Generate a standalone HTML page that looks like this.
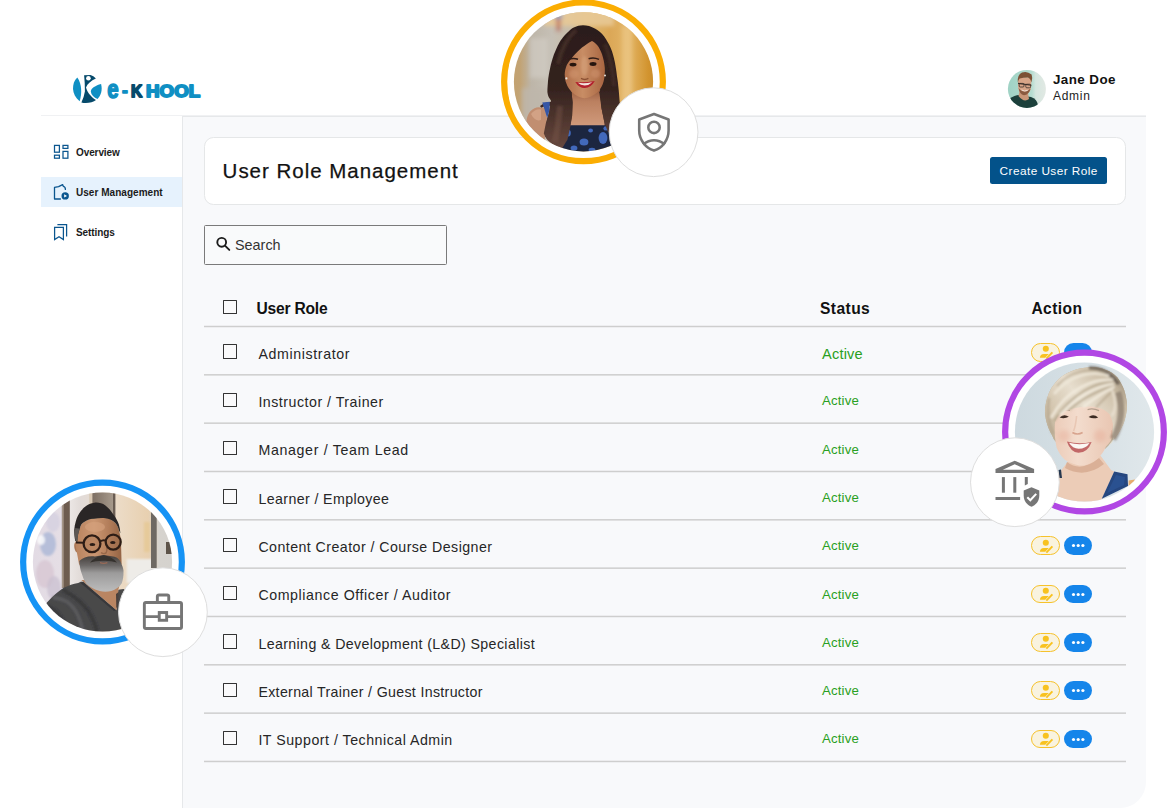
<!DOCTYPE html>
<html lang="en">
<head>
<meta charset="utf-8">
<title>User Role Management</title>
<style>
*{box-sizing:border-box;margin:0;padding:0}
html,body{width:1167px;height:808px;overflow:hidden;background:#fff}
body{position:relative;font-family:"Liberation Sans",sans-serif;color:#1a1a1a}
.abs{position:absolute}
.t{position:absolute;white-space:nowrap;line-height:1}
#hline{left:41px;top:115px;width:1105px;height:1px;background:#f0f1f3}
#panel{left:182px;top:116px;width:964px;height:692px;background:#f8f9fb;border-left:1px solid #e6e8ea;border-top:1px solid #e6e8ea;border-bottom-right-radius:26px}
#navact{left:41px;top:177px;width:141px;height:30px;background:#e6f2fd}
.nav{font-size:10px;font-weight:bold;color:#1b1b1b;left:76px}
#card{left:204px;top:137px;width:922px;height:68px;background:#fff;border:1px solid #e5e7e8;border-radius:9.5px}
#title{left:222.6px;top:160.6px;font-size:20.5px;color:#121212;letter-spacing:.98px;-webkit-text-stroke:.25px #121212}
#btn{left:990px;top:157px;width:117px;height:27px;background:#03528a;border-radius:2.5px;color:#fff;font-size:11.8px;text-align:center;line-height:28.6px;letter-spacing:.45px;text-indent:.45px}
#search{left:204px;top:225px;width:243px;height:40px;border:1px solid #7a7a7a;border-radius:1.5px;background:#f9fafb}
#stext{left:235px;top:238px;font-size:14.4px;color:#333}
.th{font-size:15.6px;font-weight:bold;color:#111;top:301.2px}
.cb{position:absolute;left:223px;width:14.3px;height:14.3px;border:1.25px solid #333;border-radius:.6px;background:#fafafb}
.rt{font-size:14.2px;color:#262626;left:258.4px}
.st{font-size:13.2px;color:#2aa022;left:822px;letter-spacing:.18px}
.st1{font-size:14.6px}
.py{position:absolute;left:1031.1px;width:29.4px;height:18.9px;border:1.5px solid #f6c22c;border-radius:10px;background:#f9f3df;overflow:hidden}
.py svg{position:absolute;left:-1.5px;top:-1.5px}
.pb{position:absolute;left:1063.6px;width:28.4px;height:18.9px;border-radius:10px;background:#1585ea;text-align:center;font-size:0;line-height:18.9px}
.pb svg{display:block}
.uname{left:1053px;top:73px;font-size:13.4px;font-weight:bold;color:#111;letter-spacing:.42px}
.urole{left:1053px;top:90px;font-size:12px;color:#1c1c1c;letter-spacing:.7px}

</style>
</head>
<body>
<!-- shared svg filters -->
<svg width="0" height="0" style="position:absolute">
<defs>
<filter id="b1" x="-20%" y="-20%" width="140%" height="140%"><feGaussianBlur stdDeviation="1"/></filter>
<filter id="b2" x="-20%" y="-20%" width="140%" height="140%"><feGaussianBlur stdDeviation="2"/></filter>
<filter id="b3" x="-20%" y="-20%" width="140%" height="140%"><feGaussianBlur stdDeviation="3.5"/></filter>
<filter id="b05" x="-20%" y="-20%" width="140%" height="140%"><feGaussianBlur stdDeviation="0.5"/></filter>
</defs>
</svg>

<!-- header -->
<div class="abs" id="hline"></div>
<div class="abs" id="panel"></div>

<!-- logo -->
<svg class="abs" style="left:65px;top:68px" width="145" height="40" viewBox="65 68 145 40">
<path d="M77.3 77.6 C71.4 83 71 95 79.7 101.2 C82 94 82 84 77.3 77.6 Z" fill="#0f8fc3"/>
<path d="M84.1 75.2 L90.5 75 Q93.5 75.8 95.9 78.4 C91 80.6 87.4 83.6 86 87.4 C87.6 93 91.5 97 96 100 C93 102.6 86 103.6 81.4 102.4 Q84 97 84.9 91.4 Q85 83 84.1 75.2 Z" fill="#064a6b"/>
<circle cx="88.4" cy="78.3" r="2.3" fill="#fff"/>
<path d="M101.1 84.1 C95.6 85.6 91 88.2 90.8 91.6 C91.2 95 94 97.6 97.5 99 C101 95.6 102.6 90 101.1 84.1 Z" fill="#0f8fc3"/>
<g font-family="Liberation Sans, sans-serif" font-weight="bold" stroke-linejoin="round">
<text x="107.3" y="97.7" font-size="25" fill="#0f8fc3" stroke="#0f8fc3" stroke-width="1.5" textLength="11.4" lengthAdjust="spacingAndGlyphs">e</text>
<text x="121.9" y="96.8" font-size="19" fill="#0f8fc3" stroke="#0f8fc3" stroke-width="1.5" textLength="5.8" lengthAdjust="spacingAndGlyphs">-</text>
<text x="131" y="96.8" font-size="16.6" fill="#064a6b" stroke="#064a6b" stroke-width="1.8" textLength="11.2" lengthAdjust="spacingAndGlyphs">K</text>
<text x="146.1" y="96.8" font-size="16.6" fill="#0f8fc3" stroke="#0f8fc3" stroke-width="1.8" textLength="54" lengthAdjust="spacingAndGlyphs">HOOL</text>
</g>
</svg>

<!-- user -->
<svg class="abs" style="left:1007px;top:69px" width="40" height="40" viewBox="0 0 40 40">
<defs><clipPath id="cav"><circle cx="19.9" cy="19.9" r="19"/></clipPath>
<linearGradient id="gav" x1="0" x2="1" y1="0" y2="0"><stop offset="0" stop-color="#9ed2c4"/><stop offset=".62" stop-color="#b5dcd0"/><stop offset=".72" stop-color="#d5e6df"/><stop offset="1" stop-color="#e3e9e4"/></linearGradient></defs>
<g clip-path="url(#cav)">
<rect width="40" height="40" fill="url(#gav)"/>
<g filter="url(#b05)">
<path d="M2 30 Q8 26 12 26 L24 28 Q30 30 31 36 L31 42 L0 42 Z" fill="#1b403b"/>
<path d="M12.5 22 L21 24 L22 30 Q17 34 11.5 27 Z" fill="#c99678"/>
<path d="M11.2 8.6 L24.2 8.6 L24.2 17 Q23.6 25.4 17.6 25.4 Q11.6 25.4 11 17 Z" fill="#d8a588"/>
<path d="M11.6 19 Q12.5 25.5 17 26.2 Q22 26 23.6 19.5 Q20 23 17.5 22.4 Q14 22.4 11.6 19 Z" fill="#8a5a41"/>
<path d="M10.8 13.5 Q10 6 15 3.6 Q20 1.6 24.6 5.6 Q26 9 24.4 13.6 Q23.6 9.6 21 8.6 Q16 8.6 12.6 9.4 Q11.4 11 10.8 13.5 Z" fill="#7b5136"/>
<path d="M11 14.4 L24.4 16.2" stroke="#3a2f2a" stroke-width="1.1" fill="none"/>
<rect x="12.2" y="14.4" width="4.8" height="3.6" rx="1" fill="none" stroke="#3a2f2a" stroke-width=".8"/>
<rect x="18.8" y="15.2" width="4.8" height="3.6" rx="1" fill="none" stroke="#3a2f2a" stroke-width=".8"/>
<path d="M14.6 21 Q17.5 22.8 20.6 21.4" stroke="#f3e6de" stroke-width=".9" fill="none"/>
</g>
</g>
</svg>
<div class="t uname">Jane Doe</div>
<div class="t urole">Admin</div>

<!-- sidebar -->
<div class="abs" id="navact"></div>
<svg class="abs" style="left:52px;top:143px" width="18" height="18" viewBox="52 143 18 18" fill="none" stroke="#0b568f" stroke-width="1.25">
<rect x="54.5" y="145.4" width="4.9" height="6.8"/><rect x="54.5" y="155.2" width="4.9" height="3"/>
<rect x="63" y="145.4" width="4.9" height="3"/><rect x="63" y="151.4" width="4.9" height="6.8"/>
</svg>
<svg class="abs" style="left:52px;top:182px" width="20" height="20" viewBox="52 182 20 20" fill="none" stroke="#0b568f" stroke-width="1.3" stroke-linejoin="round" stroke-linecap="round">
<path d="M60.4 199 L54.5 199 L54.5 187.4 L58.6 186.6 L62.6 184.6 L63.4 186.4 Q65.4 186.8 65.4 189.4"/>
<circle cx="65.2" cy="195.9" r="3.7" fill="#0b568f" stroke="none"/>
<path d="M64.2 194.2 L67 195.9 L64.2 197.6 Z" fill="#fff" stroke="none"/>
</svg>
<svg class="abs" style="left:52px;top:222px" width="18" height="20" viewBox="52 222 18 20" fill="none" stroke="#0b568f" stroke-width="1.25" stroke-linejoin="miter">
<path d="M54.6 227.4 L63.4 227.4 L63.4 239.6 L59 236.8 L54.6 239.6 Z"/>
<path d="M57.4 224.6 L66.6 224.6 L66.6 236.4"/>
</svg>
<div class="t nav" style="top:147.6px;letter-spacing:-.1px">Overview</div>
<div class="t nav" style="top:188.2px;letter-spacing:.04px">User Management</div>
<div class="t nav" style="top:227.6px;letter-spacing:-.08px">Settings</div>
<!-- title card -->
<div class="abs" id="card"></div>
<div class="t" id="title">User Role Management</div>
<div class="t" id="btn">Create User Role</div>

<!-- search -->
<div class="abs" id="search"></div>
<svg class="abs" style="left:214px;top:235.4px" width="18" height="18" viewBox="214 236 18 18" fill="none" stroke="#1c1c1c" stroke-width="1.9" stroke-linecap="round"><circle cx="221.7" cy="243.3" r="4.4"/><path d="M225.2 246.8 L229.3 250.9"/></svg>
<div class="t" id="stext">Search</div>

<!-- table -->
<div class="cb" style="top:300px"></div>
<div class="t th" style="left:256.4px;letter-spacing:-.2px">User Role</div>
<div class="t th" style="left:820px;letter-spacing:.42px">Status</div>
<div class="t th" style="left:1031.4px;letter-spacing:.42px">Action</div>
<div class="cb" style="top:344.3px"></div>
<div class="t rt" style="top:346.7px;letter-spacing:0.63px">Administrator</div>
<div class="t st st1" style="top:346.9px">Active</div>
<div class="py" style="top:342.9px"><svg viewBox="0 0 30 19" width="30" height="19" fill="#f8c21f"><circle cx="14.8" cy="6.8" r="3.05"/><path d="M8.9 15.7 Q9 12.2 13 12 L17.8 12 L14.2 15.7 Z"/><path d="M14.7 16 L20.7 9.8 L22.1 11.1 L16 17.2 Z"/></svg></div>
<div class="pb" style="top:342.9px"><svg viewBox="0 0 28.4 18.9" width="28.4" height="18.9"><circle cx="9.5" cy="9.5" r="1.6" fill="#fff"/><circle cx="14.2" cy="9.5" r="1.6" fill="#fff"/><circle cx="18.9" cy="9.5" r="1.6" fill="#fff"/></svg></div>
<div class="cb" style="top:392.6px"></div>
<div class="t rt" style="top:395.0px;letter-spacing:0.51px">Instructor / Trainer</div>
<div class="t st" style="top:394.1px">Active</div>
<div class="py" style="top:391.2px"><svg viewBox="0 0 30 19" width="30" height="19" fill="#f8c21f"><circle cx="14.8" cy="6.8" r="3.05"/><path d="M8.9 15.7 Q9 12.2 13 12 L17.8 12 L14.2 15.7 Z"/><path d="M14.7 16 L20.7 9.8 L22.1 11.1 L16 17.2 Z"/></svg></div>
<div class="pb" style="top:391.2px"><svg viewBox="0 0 28.4 18.9" width="28.4" height="18.9"><circle cx="9.5" cy="9.5" r="1.6" fill="#fff"/><circle cx="14.2" cy="9.5" r="1.6" fill="#fff"/><circle cx="18.9" cy="9.5" r="1.6" fill="#fff"/></svg></div>
<div class="cb" style="top:441.0px"></div>
<div class="t rt" style="top:443.4px;letter-spacing:0.67px">Manager / Team Lead</div>
<div class="t st" style="top:442.5px">Active</div>
<div class="py" style="top:439.6px"><svg viewBox="0 0 30 19" width="30" height="19" fill="#f8c21f"><circle cx="14.8" cy="6.8" r="3.05"/><path d="M8.9 15.7 Q9 12.2 13 12 L17.8 12 L14.2 15.7 Z"/><path d="M14.7 16 L20.7 9.8 L22.1 11.1 L16 17.2 Z"/></svg></div>
<div class="pb" style="top:439.6px"><svg viewBox="0 0 28.4 18.9" width="28.4" height="18.9"><circle cx="9.5" cy="9.5" r="1.6" fill="#fff"/><circle cx="14.2" cy="9.5" r="1.6" fill="#fff"/><circle cx="18.9" cy="9.5" r="1.6" fill="#fff"/></svg></div>
<div class="cb" style="top:489.3px"></div>
<div class="t rt" style="top:491.7px;letter-spacing:0.40px">Learner / Employee</div>
<div class="t st" style="top:490.8px">Active</div>
<div class="py" style="top:487.9px"><svg viewBox="0 0 30 19" width="30" height="19" fill="#f8c21f"><circle cx="14.8" cy="6.8" r="3.05"/><path d="M8.9 15.7 Q9 12.2 13 12 L17.8 12 L14.2 15.7 Z"/><path d="M14.7 16 L20.7 9.8 L22.1 11.1 L16 17.2 Z"/></svg></div>
<div class="pb" style="top:487.9px"><svg viewBox="0 0 28.4 18.9" width="28.4" height="18.9"><circle cx="9.5" cy="9.5" r="1.6" fill="#fff"/><circle cx="14.2" cy="9.5" r="1.6" fill="#fff"/><circle cx="18.9" cy="9.5" r="1.6" fill="#fff"/></svg></div>
<div class="cb" style="top:537.6px"></div>
<div class="t rt" style="top:540.0px;letter-spacing:0.45px">Content Creator / Course Designer</div>
<div class="t st" style="top:539.1px">Active</div>
<div class="py" style="top:536.2px"><svg viewBox="0 0 30 19" width="30" height="19" fill="#f8c21f"><circle cx="14.8" cy="6.8" r="3.05"/><path d="M8.9 15.7 Q9 12.2 13 12 L17.8 12 L14.2 15.7 Z"/><path d="M14.7 16 L20.7 9.8 L22.1 11.1 L16 17.2 Z"/></svg></div>
<div class="pb" style="top:536.2px"><svg viewBox="0 0 28.4 18.9" width="28.4" height="18.9"><circle cx="9.5" cy="9.5" r="1.6" fill="#fff"/><circle cx="14.2" cy="9.5" r="1.6" fill="#fff"/><circle cx="18.9" cy="9.5" r="1.6" fill="#fff"/></svg></div>
<div class="cb" style="top:585.9px"></div>
<div class="t rt" style="top:588.4px;letter-spacing:0.58px">Compliance Officer / Auditor</div>
<div class="t st" style="top:587.5px">Active</div>
<div class="py" style="top:584.5px"><svg viewBox="0 0 30 19" width="30" height="19" fill="#f8c21f"><circle cx="14.8" cy="6.8" r="3.05"/><path d="M8.9 15.7 Q9 12.2 13 12 L17.8 12 L14.2 15.7 Z"/><path d="M14.7 16 L20.7 9.8 L22.1 11.1 L16 17.2 Z"/></svg></div>
<div class="pb" style="top:584.5px"><svg viewBox="0 0 28.4 18.9" width="28.4" height="18.9"><circle cx="9.5" cy="9.5" r="1.6" fill="#fff"/><circle cx="14.2" cy="9.5" r="1.6" fill="#fff"/><circle cx="18.9" cy="9.5" r="1.6" fill="#fff"/></svg></div>
<div class="cb" style="top:634.3px"></div>
<div class="t rt" style="top:636.7px;letter-spacing:0.38px">Learning &amp; Development (L&amp;D) Specialist</div>
<div class="t st" style="top:635.8px">Active</div>
<div class="py" style="top:632.9px"><svg viewBox="0 0 30 19" width="30" height="19" fill="#f8c21f"><circle cx="14.8" cy="6.8" r="3.05"/><path d="M8.9 15.7 Q9 12.2 13 12 L17.8 12 L14.2 15.7 Z"/><path d="M14.7 16 L20.7 9.8 L22.1 11.1 L16 17.2 Z"/></svg></div>
<div class="pb" style="top:632.9px"><svg viewBox="0 0 28.4 18.9" width="28.4" height="18.9"><circle cx="9.5" cy="9.5" r="1.6" fill="#fff"/><circle cx="14.2" cy="9.5" r="1.6" fill="#fff"/><circle cx="18.9" cy="9.5" r="1.6" fill="#fff"/></svg></div>
<div class="cb" style="top:682.6px"></div>
<div class="t rt" style="top:685.0px;letter-spacing:0.33px">External Trainer / Guest Instructor</div>
<div class="t st" style="top:684.1px">Active</div>
<div class="py" style="top:681.2px"><svg viewBox="0 0 30 19" width="30" height="19" fill="#f8c21f"><circle cx="14.8" cy="6.8" r="3.05"/><path d="M8.9 15.7 Q9 12.2 13 12 L17.8 12 L14.2 15.7 Z"/><path d="M14.7 16 L20.7 9.8 L22.1 11.1 L16 17.2 Z"/></svg></div>
<div class="pb" style="top:681.2px"><svg viewBox="0 0 28.4 18.9" width="28.4" height="18.9"><circle cx="9.5" cy="9.5" r="1.6" fill="#fff"/><circle cx="14.2" cy="9.5" r="1.6" fill="#fff"/><circle cx="18.9" cy="9.5" r="1.6" fill="#fff"/></svg></div>
<div class="cb" style="top:730.9px"></div>
<div class="t rt" style="top:733.3px;letter-spacing:0.51px">IT Support / Technical Admin</div>
<div class="t st" style="top:732.4px">Active</div>
<div class="py" style="top:729.5px"><svg viewBox="0 0 30 19" width="30" height="19" fill="#f8c21f"><circle cx="14.8" cy="6.8" r="3.05"/><path d="M8.9 15.7 Q9 12.2 13 12 L17.8 12 L14.2 15.7 Z"/><path d="M14.7 16 L20.7 9.8 L22.1 11.1 L16 17.2 Z"/></svg></div>
<div class="pb" style="top:729.5px"><svg viewBox="0 0 28.4 18.9" width="28.4" height="18.9"><circle cx="9.5" cy="9.5" r="1.6" fill="#fff"/><circle cx="14.2" cy="9.5" r="1.6" fill="#fff"/><circle cx="18.9" cy="9.5" r="1.6" fill="#fff"/></svg></div>
<svg class="abs" style="left:204px;top:320px" width="922" height="450" viewBox="204 320 922 450"><rect x="204" y="325.75" width="922" height="1.5" fill="#cecece"/><rect x="204" y="374.08" width="922" height="1.5" fill="#cecece"/><rect x="204" y="422.41" width="922" height="1.5" fill="#cecece"/><rect x="204" y="470.74" width="922" height="1.5" fill="#cecece"/><rect x="204" y="519.07" width="922" height="1.5" fill="#cecece"/><rect x="204" y="567.40" width="922" height="1.5" fill="#cecece"/><rect x="204" y="615.73" width="922" height="1.5" fill="#cecece"/><rect x="204" y="664.06" width="922" height="1.5" fill="#cecece"/><rect x="204" y="712.39" width="922" height="1.5" fill="#cecece"/><rect x="204" y="760.72" width="922" height="1.5" fill="#cecece"/></svg>
<!-- overlay 1: top (amber ring) -->
<svg class="abs" style="left:499px;top:0" width="170" height="168" viewBox="-5 -2 170 168">
<defs><clipPath id="cp1"><circle cx="79.5" cy="79.8" r="69.6"/></clipPath>
<linearGradient id="g1bg" x1="0" x2="1" y1="0" y2="0">
<stop offset="0" stop-color="#c4a06c"/><stop offset=".1" stop-color="#c2a374"/><stop offset=".17" stop-color="#bdb5a8"/><stop offset=".3" stop-color="#c6c0b6"/><stop offset=".42" stop-color="#c8bca8"/><stop offset=".5" stop-color="#dcb877"/><stop offset=".66" stop-color="#dba757"/><stop offset=".78" stop-color="#e3b566"/><stop offset=".9" stop-color="#d2942f"/><stop offset="1" stop-color="#c08024"/></linearGradient>
<linearGradient id="g1hair" gradientUnits="userSpaceOnUse" x1="0" x2="0" y1="23" y2="150"><stop offset="0" stop-color="#2b1c1a"/><stop offset=".5" stop-color="#34221e"/><stop offset=".8" stop-color="#553a32"/><stop offset="1" stop-color="#6a4a40"/></linearGradient>
<linearGradient id="g1face" x1="0" x2="1" y1="0" y2="0"><stop offset="0" stop-color="#b06e49"/><stop offset=".45" stop-color="#c88d65"/><stop offset="1" stop-color="#a86541"/></linearGradient>
<linearGradient id="g1neck" x1="0" x2="0" y1="0" y2="1"><stop offset="0" stop-color="#96593c"/><stop offset=".35" stop-color="#bb8060"/><stop offset="1" stop-color="#d09a7b"/></linearGradient>
</defs>
<circle cx="79.5" cy="79.8" r="79.35" fill="#fff" stroke="#fbad02" stroke-width="6.2"/>
<g clip-path="url(#cp1)">
<rect x="0" y="0" width="160" height="160" fill="url(#g1bg)"/>
<g filter="url(#b2)">
<rect x="40" y="0" width="70" height="24" fill="#e8c996" opacity=".9"/>
<rect x="26" y="36" width="18" height="40" fill="#d4cfc7" opacity=".6"/>
<rect x="18" y="86" width="26" height="40" fill="#beb7ab" opacity=".8"/>
<rect x="52" y="15" width="5" height="14" fill="#b4564a" opacity=".6"/><rect x="51" y="9" width="7" height="8" fill="#6f93cf" opacity=".7"/>
<rect x="118" y="24" width="10" height="90" fill="#ecc888" opacity=".7"/>
</g>
<g filter="url(#b05)">
<!-- hair mass -->
<path d="M79 23.2 C72 23.4 68 26 64.6 29.5 C60 33.6 57 38 55.7 40 C53 45 51.4 49 50 52.3 C48 58 47 62 46.2 65.7 C45 71 44.4 75 44 79 C43.6 84 43.4 87 43.4 90 C44 96 46.6 97 47 98.5 C46.6 103 46 107 45 110.8 C44 115 43 118 41.9 121 C40.8 125 40 128 39.8 131.4 C42 138 48 142 56.3 146 L60 150 L110 150 L116 104 C115.6 98 115 92 114.7 88 C114.2 83 113.6 78 113 74.6 C112.4 69 111.6 64 110.8 60 C109.8 55 108.4 50 107 46.8 C105 42 102.6 38 100.2 34.5 C97.6 31 94.6 28.6 91.3 26.7 C87 24.2 83 23.2 79 23.2 Z" fill="url(#g1hair)"/>
<path d="M36 104 C40 100.6 44 99.6 48 100 L47 104 C43 103.4 40 104 37.4 106 Z" fill="#3a2722"/>
<!-- shoulder left -->
<path d="M22.4 120 C23 110 29 105.4 34.6 105.2 L41 106 L43 116 C42 126 40.4 136 40 150 L22 150 Z" fill="#c18e70"/>
<path d="M27 112 Q31 106.6 37 107.4 L37 118 Q31 120 27 112 Z" fill="#d6a88b" opacity=".8"/>
<path d="M38.3 100.6 L45.8 99.8 L45.6 108 L43.2 116 Z" fill="#3456a6"/>
<!-- neck + chest -->
<path d="M67 86 L96 86 L97.4 105.7 L100.5 121 L100.5 124 L66 124 L68.1 114 L68.6 100.6 Z" fill="url(#g1neck)"/>
<!-- dress -->
<path d="M60.4 123.2 L106.7 123.2 L108 152 L56 152 Z" fill="#1e2540"/>
<g fill="#4269bb"><ellipse cx="64" cy="131" rx="2.8" ry="3.6"/><ellipse cx="80" cy="140" rx="4.4" ry="3.6"/><ellipse cx="86.6" cy="128.6" rx="2.4" ry="2"/><ellipse cx="99" cy="136" rx="4.4" ry="6"/><ellipse cx="70" cy="146" rx="3.4" ry="2.6"/><ellipse cx="88" cy="148" rx="3.4" ry="2.2"/><ellipse cx="102" cy="126.4" rx="2.6" ry="2.2"/></g>
<!-- front locks -->
<path d="M44.4 80 L46 90.3 L47 98.5 L45 110.8 L41.9 121 L39.8 131.4 C42 138 48 142 56.3 146 L58.3 146 L63.5 137.6 L66.6 123.2 L68.1 114 L68.6 100.6 L67.6 90.3 L62 80 Z" fill="url(#g1hair)"/>
<path d="M95.3 90.3 L97.4 105.7 L100.5 121 L104 130 L116 130 L114.9 98.5 L112.8 88.2 L100 80 Z" fill="url(#g1hair)"/>
<!-- face -->
<path d="M88 39 C84 41 81 43.4 78 45.6 C74.6 48.4 71.6 51.6 69 54.6 C66.6 57.4 64.6 60 63 62.4 C61.4 66 60.8 69.4 60.7 72.4 C60.8 76 61.4 79 62.3 81.3 C63.6 85 65.6 88 68 90.2 C71.6 93.6 75.6 95.6 80.2 96.3 C85 95.8 89.6 93.6 93.5 90.2 C96.6 87 98.6 83.4 99.7 79 C100.8 74.6 101 70 100.8 65.7 C100.4 61 99.4 56.6 98 52.3 C96.8 48.6 95.2 45.6 93.5 43.4 C91.6 41.4 89.8 40 88 39 Z" fill="url(#g1face)"/>
<g filter="url(#b1)"><ellipse cx="80.6" cy="64" rx="3.4" ry="10" fill="#dcaa84" opacity=".45"/><ellipse cx="70" cy="72" rx="5" ry="4.4" fill="#d19570" opacity=".5"/><ellipse cx="91.6" cy="71.6" rx="4.6" ry="4.4" fill="#d19570" opacity=".5"/></g>
<!-- hair highlights -->
<g filter="url(#b1)"><path d="M72 28 C63 36 57 48 54 62" stroke="#5c4037" stroke-width="4" fill="none" opacity=".45"/>
<path d="M101 42 C106 54 109 68 110 84" stroke="#553930" stroke-width="4" fill="none" opacity=".4"/>
<path d="M56 104 C55 118 53 130 51 140" stroke="#7a574b" stroke-width="6" fill="none" opacity=".4"/></g>
<!-- eyes, brows -->
<ellipse cx="69" cy="62.6" rx="3.5" ry="1.9" fill="#25130f"/><ellipse cx="89" cy="62" rx="3.5" ry="1.9" fill="#25130f"/>
<path d="M64 57.8 Q68.6 55.4 74 57.2" stroke="#301c16" stroke-width="1.5" fill="none"/><path d="M84.6 56.8 Q89.6 54.8 95 57.4" stroke="#301c16" stroke-width="1.5" fill="none"/>
<path d="M77 76.4 Q80.7 78.4 84.4 76.4" stroke="#8a5033" stroke-width="1.5" fill="none"/>
<circle cx="62.4" cy="76.4" r="1.1" fill="#e8e2d8"/><circle cx="101" cy="73.6" r="1" fill="#e8e2d8"/>
<!-- lips -->
<path d="M71.3 80 Q80.7 81 90.8 79 Q87 86 80.7 86 Q75 86 71.3 80 Z" fill="#b3212d"/>
<path d="M73.8 80.8 Q80.7 81.8 88.2 80.2 Q85 83.4 80.7 83.4 Q76.6 83.4 73.8 80.8 Z" fill="#f2e4de"/>
</g>
</g>
</svg>
<svg class="abs" style="left:606px;top:85px" width="94" height="94" viewBox="606 85 94 94"><circle cx="653.6" cy="132.2" r="44.4" fill="#fff" stroke="#dedede" stroke-width="1"/></svg>
<svg class="abs" style="left:630px;top:108px" width="48" height="48" viewBox="0 0 24 24" fill="none" stroke="#767676" stroke-width="1.28" stroke-linejoin="round">
<path d="M12 3 L4.6 5.75 V11.3 C4.6 15.8 7.7 20 12 21.3 C16.3 20 19.3 15.8 19.3 11.3 V5.75 Z"/>
<circle cx="12" cy="9.7" r="2.85"/>
<path d="M6.5 18.2 Q12 14.1 17.5 18.2"/>
</svg>

<!-- overlay 2: right (purple ring) -->
<svg class="abs" style="left:1000px;top:347px" width="167" height="170" viewBox="-5 -5 167 170">
<defs><clipPath id="cp2"><circle cx="79.5" cy="80" r="69.6"/></clipPath>
<linearGradient id="g2bg" x1="0" x2="1" y1="0" y2="0"><stop offset="0" stop-color="#ccd8de"/><stop offset=".5" stop-color="#d6e0e5"/><stop offset="1" stop-color="#e2e9ec"/></linearGradient>
<linearGradient id="g2hair" gradientUnits="userSpaceOnUse" x1="118" y1="24" x2="44" y2="84"><stop offset="0" stop-color="#9a8c78"/><stop offset=".18" stop-color="#cdbfa8"/><stop offset=".5" stop-color="#e7dece"/><stop offset=".8" stop-color="#d3c5ae"/><stop offset="1" stop-color="#bcae97"/></linearGradient>
<linearGradient id="g2face" x1="0" x2="1" y1="0" y2="0"><stop offset="0" stop-color="#ecccb9"/><stop offset=".4" stop-color="#f3dccd"/><stop offset="1" stop-color="#e9c6b2"/></linearGradient>
</defs>
<circle cx="79.5" cy="80" r="79.35" fill="#fff" stroke="#b147e4" stroke-width="6.2"/>
<g clip-path="url(#cp2)">
<rect x="0" y="0" width="160" height="160" fill="url(#g2bg)"/>
<g filter="url(#b05)">
<!-- hair back -->
<path d="M86.9 15 C80 15.4 75 16.4 70.1 17.8 C65 19.6 60.6 22 56.8 24.5 C52.6 27.8 49.4 31.6 46.7 35.6 C44.4 39.6 42.8 43.6 41.7 47.9 C40.6 52 40 56 40 60 C40.2 64.6 41 68.6 42.3 72.4 C43.4 76 45 79.6 46.7 82.4 L49.2 88 L56 96 L100 97 L103.6 93.6 L108 88 C110.6 85.4 112.8 82.4 114.7 79 C117.4 74.6 119.2 70.4 120.3 65.7 C121.6 61 122 56.6 122 52.3 C121.6 47 120.6 42.4 119.2 37.9 C117.4 33.4 115.2 29.4 112.5 25.6 C109 21.8 105 19.4 100.2 17.8 C96 16 91.4 15 86.9 15 Z" fill="#bfb19a"/>
<!-- neck, shoulders -->
<path d="M64 108 L95.8 104 L106 118 L109.2 119.6 L97 147 L90 152 L40 152 L46 124 L55.7 119 Z" fill="#ecccb7"/>
<path d="M62 110 Q76 121 94 106 L99 112 Q80 127 60 116 Z" fill="#d6a98f" opacity=".8"/>
<!-- top -->
<path d="M109.2 119.6 L122.5 122.2 L123 134 L96.8 146.8 Z" fill="#25467f"/>
<path d="M111 123 L120 125 L119 133 L102 141 Z" fill="#2f5697" opacity=".7"/>
<path d="M53.6 118 L56 117.6 L57 126 L54.4 126 Z" fill="#27384f"/>
<path d="M123.6 128.6 L130 127.6 L128 134 L123.6 135 Z" fill="#e6ab6c"/>
<!-- face -->
<path d="M49.5 72 C50 64 56 58 62.3 56 C70 53 80 52.6 86.9 52.6 C94 53 100 55 104.7 60 C107.4 64 108.4 68 108 72.4 L107.5 82.4 C107 87 105 91 101 94.4 C99 99 96.6 102.6 93.8 105.7 C90.6 108.6 87 110.6 83.5 111.9 C80 113.4 77 113.8 74.2 113.4 C69 112.6 64 110.6 59.8 107.8 C56 104 53.4 100 51.6 95.4 C50 88 49.2 80 49.5 72 Z" fill="url(#g2face)"/>
<g filter="url(#b2)"><ellipse cx="59" cy="84" rx="6" ry="6" fill="#e9b4a0" opacity=".5"/><ellipse cx="95" cy="84" rx="6" ry="6.4" fill="#e7b09c" opacity=".5"/></g>
<path d="M106 78 Q109.6 79 108.4 84 Q107.4 87 105.6 87 Z" fill="#e3b9a3"/>
<!-- eyes brows -->
<path d="M54.6 65.6 Q59 61.4 63.8 64.8 Q59.4 67.2 54.6 65.6 Z" fill="#3a2921"/><path d="M83.6 65 Q88.2 61.2 93.2 65.4 Q88.2 67.4 83.6 65 Z" fill="#3a2921"/>
<path d="M54 58.8 Q59 56.6 65 58.4" stroke="#b49e8c" stroke-width="1.2" fill="none"/><path d="M82.6 57.6 Q88 55.8 94 58.6" stroke="#b49e8c" stroke-width="1.2" fill="none"/>
<path d="M67.4 80.6 Q72.4 83.4 77.6 80.6" stroke="#d8a48e" stroke-width="1.7" fill="none"/>
<path d="M71.6 64 Q70.6 74 68.6 79" stroke="#e6c2ae" stroke-width="1.6" fill="none" opacity=".8"/>
<!-- smile -->
<path d="M61.9 89.6 Q74 92.6 86.6 90 Q82.6 101 73.2 100.8 Q65.6 100.4 61.9 89.6 Z" fill="#c26868"/>
<path d="M64 90.8 Q74 93.4 84.6 91 Q81 96.8 73.6 96.8 Q67.6 96.6 64 90.8 Z" fill="#fbf7f3"/>
<!-- hair front fringe -->
<path d="M86.9 15 C80 15.4 75 16.4 70.1 17.8 C65 19.6 60.6 22 56.8 24.5 C52.6 27.8 49.4 31.6 46.7 35.6 C44.4 39.6 42.8 43.6 41.7 47.9 C40.6 52 40 56 40 60 C40.2 64.6 41 68.6 42.3 72.4 C43.4 76 45 79.6 46.7 82.4 L49.2 88 C49 82 49.2 77 49.5 72.4 C50.4 68.6 51.8 65.8 53.4 63.5 C56 61 59 59.4 62.3 58 C66.6 56.6 71 55.6 75.7 55 C79.6 54.7 83.4 54.6 86.9 54.6 C90.4 55 93.8 55.8 96.9 56.8 C99.8 58.2 102.4 60.2 104.7 62.4 C106.4 65.6 107.4 69 108 72.4 L107.5 82.4 L108 88 L103.6 93.6 C106 92 108 90 108 88 C110.6 85.4 112.8 82.4 114.7 79 C117.4 74.6 119.2 70.4 120.3 65.7 C121.6 61 122 56.6 122 52.3 C121.6 47 120.6 42.4 119.2 37.9 C117.4 33.4 115.2 29.4 112.5 25.6 C109 21.8 105 19.4 100.2 17.8 C96 16 91.4 15 86.9 15 Z" fill="url(#g2hair)"/>
<g filter="url(#b1)">
<path d="M84 16 C95 15.6 106 21 113.6 32" stroke="#5a5047" stroke-width="3.6" fill="none" opacity=".75"/>
<path d="M108 28 C90 26 62 36 46 66" stroke="#f2ecdf" stroke-width="3" fill="none" opacity=".8"/>
<path d="M108 30.5 C92 30 68 40 49 69" stroke="#b3a48b" stroke-width="2" fill="none" opacity=".75"/>
<path d="M109 32 C96 33 74 42 55 63" stroke="#f2ecdf" stroke-width="3" fill="none" opacity=".8"/>
<path d="M110 34 C98 36 80 44 64 58" stroke="#b3a48b" stroke-width="2" fill="none" opacity=".75"/>
<path d="M110 35 C102 38 90 46 78 55" stroke="#f2ecdf" stroke-width="3" fill="none" opacity=".8"/>
<path d="M111 36 C106 40 98 48 91 55.4" stroke="#b3a48b" stroke-width="2" fill="none" opacity=".7"/>
<path d="M104 24 C88 18 66 22 49 42" stroke="#efe8da" stroke-width="3" fill="none" opacity=".8"/>
<path d="M100 21 C86 16 66 18 52 34" stroke="#b8a991" stroke-width="2" fill="none" opacity=".7"/>
<path d="M44 46 C42 58 44 72 48 82" stroke="#b0a18a" stroke-width="3" fill="none" opacity=".6"/>
<path d="M113 40 C118 54 117 72 108 87" stroke="#85776a" stroke-width="6.5" fill="none" opacity=".7"/>
<path d="M107 38 C111 48 111 58 107 64" stroke="#efe7d8" stroke-width="2.6" fill="none" opacity=".7"/>
</g>
</g>
</g>
</svg>
<svg class="abs" style="left:967px;top:435px" width="94" height="94" viewBox="967 435 94 94"><circle cx="1014.9" cy="482.2" r="44.4" fill="#fff" stroke="#dedede" stroke-width="1"/></svg>
<svg class="abs" style="left:990px;top:456px" width="54" height="54" viewBox="990 456 54 54" fill="#767676">
<path fill-rule="evenodd" d="M995.5 472.9 V469 L1014.7 460.7 L1034.1 469 V472.9 Z M1002.9 469.8 L1014.7 464.2 L1026.4 469.8 Z"/>
<rect x="1001.9" y="477.1" width="3" height="15.6"/><rect x="1013.3" y="477.1" width="3" height="15.6"/>
<path d="M1024.8 477.1 H1027.8 V484 L1024.8 485.4 Z"/>
<rect x="995.5" y="497" width="24.6" height="3"/>
<path d="M1031.5 487.2 L1039.3 490.6 V495.8 C1039.3 500.8 1036.1 505 1031.5 506.7 C1026.9 505 1023.7 500.8 1023.7 495.8 V490.6 Z"/>
<path d="M1027.3 497.2 L1030.3 500.2 L1036.2 493.9" stroke="#fff" stroke-width="2.1" fill="none"/>
</svg>

<!-- overlay 3: left (blue ring) -->
<svg class="abs" style="left:18px;top:477px" width="170" height="170" viewBox="-5 -5 170 170">
<defs><clipPath id="cp3"><circle cx="79.5" cy="80" r="69.6"/></clipPath>
<linearGradient id="g3bg" x1="0" x2="1" y1="0" y2="0"><stop offset="0" stop-color="#e2dae4"/><stop offset=".24" stop-color="#e5dee5"/><stop offset=".3" stop-color="#eae5e3"/><stop offset=".36" stop-color="#e2dbd8"/><stop offset=".58" stop-color="#ecdcc8"/><stop offset=".78" stop-color="#e8d0b0"/><stop offset=".85" stop-color="#d6d3ce"/><stop offset="1" stop-color="#d4d2ce"/></linearGradient>
<linearGradient id="g3beard" gradientUnits="userSpaceOnUse" x1="0" x2="0" y1="74" y2="108"><stop offset="0" stop-color="#45403d"/><stop offset=".28" stop-color="#6c6968"/><stop offset=".5" stop-color="#9c9b9b"/><stop offset="1" stop-color="#b9b9b9"/></linearGradient>
<linearGradient id="g3face" x1="0" x2="1" y1="0" y2="0"><stop offset="0" stop-color="#b9835f"/><stop offset=".4" stop-color="#cb9772"/><stop offset=".75" stop-color="#b07b58"/><stop offset="1" stop-color="#946445"/></linearGradient>
<linearGradient id="g3col" x1="0" x2="1" y1="0" y2="0"><stop offset="0" stop-color="#d9c9b5"/><stop offset=".12" stop-color="#d9c9b5"/><stop offset=".13" stop-color="#7d6f63"/><stop offset=".9" stop-color="#a6998b"/><stop offset=".91" stop-color="#6a5d52"/><stop offset="1" stop-color="#6a5d52"/></linearGradient>
</defs>
<circle cx="79.5" cy="80" r="79.35" fill="#fff" stroke="#1593f5" stroke-width="6.2"/>
<g clip-path="url(#cp3)">
<rect x="0" y="0" width="160" height="160" fill="url(#g3bg)"/>
<g filter="url(#b1)">
<ellipse cx="25" cy="62" rx="8" ry="12" fill="#aab7d6" opacity=".8"/><ellipse cx="18" cy="58" rx="4" ry="5" fill="#fff" opacity=".8"/><ellipse cx="22" cy="92" rx="9" ry="14" fill="#d6c3d0" opacity=".7"/><ellipse cx="31" cy="106" rx="7" ry="12" fill="#c9bfd0" opacity=".7"/><ellipse cx="30" cy="40" rx="7" ry="10" fill="#d3cfe0" opacity=".7"/>
<rect x="103.6" y="77" width="27" height="24" fill="#eeece8"/>
<rect x="121" y="40" width="6" height="30" fill="#e6c890" opacity=".7"/>
</g>
<g filter="url(#b05)">
<rect x="38.9" y="10" width="7.9" height="96" fill="#6e5c50"/><rect x="38.9" y="10" width="1.8" height="96" fill="#a59688"/>
<rect x="66.2" y="8" width="26.2" height="30" fill="url(#g3col)"/>
<rect x="128" y="30" width="5.7" height="56" fill="#6e6963"/><rect x="143" y="60" width="7" height="12" fill="#5d5248"/>
<!-- shirt -->
<path d="M14 132 L24.4 120.1 C30 114 35 109.6 40.8 105.7 C46 103.4 50 102 55.2 101 L58.3 99.5 L93.3 128.3 L95.3 107.8 L100.5 107 L112 112 L112 152 L14 152 Z" fill="#48484a"/>
<g filter="url(#b1)"><path d="M30 116 Q44 116 52 128 Q58 138 60 150" stroke="#606062" stroke-width="3.4" fill="none" opacity=".8"/><path d="M40 108 Q56 116 66 130 Q72 140 74 150" stroke="#333335" stroke-width="3.4" fill="none" opacity=".8"/><path d="M24 124 Q38 128 44 150" stroke="#343436" stroke-width="3" fill="none" opacity=".7"/></g>
<!-- neck V -->
<path d="M58.3 98 L98 98 L95.3 107.8 L94.6 122 L93.3 128.3 Z" fill="#b98562"/>
<path d="M60 99.5 L93.3 128.3 L91 129 L57.6 101 Z" fill="#38383a"/>
<path d="M93 112 L95.6 110 L95 124 L93.3 126 Z" fill="#4a403c"/>
<!-- ear -->
<path d="M52.9 60 Q50.6 61 51.4 66 Q52.4 70.6 54.6 70.6 Z" fill="#a87453"/>
<!-- face -->
<path d="M56.8 46.8 C57.6 43 59 41 61.2 40 C64 38 67 37 70.1 36.7 C74 36.2 78.4 36 82.4 36.2 C86 36.6 89 38 91.3 40 C93.4 42 95 44.6 95.8 47.9 C97 52 97.8 56 98 60 L98.6 82 C96 90 88 95 78 95 C68 94 60 90 56 82 L52.6 63.5 C52.8 58 54 52 56.8 46.8 Z" fill="url(#g3face)"/>
<ellipse cx="72" cy="45" rx="10" ry="5" fill="#d7a47f" opacity=".6"/>
<!-- hair -->
<path d="M72.4 20.6 C66 21.4 61.6 24.6 57.9 28.9 C55.4 32 53.8 35.6 52.9 39 C52 42 51.4 45 51.2 47.9 C51.2 52 51.6 56 52.3 59 L54.2 60 C54.4 55 55.2 50.6 56.8 46.8 C57.6 43 59 41 61.2 40 C64 38 67 37 70.1 36.7 C74 36.2 78.4 36 82.4 36.2 C86 36.6 89 38 91.3 40 C93.4 42 95 44.6 95.8 47.9 L97.4 51.2 C97.2 48 96.6 45 95.8 42.3 C94.4 38.6 92.6 35.2 90.2 32.3 C88 28.6 85.4 25.6 82.4 23.4 C79.4 21.4 76 20.4 72.4 20.6 Z" fill="#2c2725"/>
<path d="M52.3 46 C51.4 50 51.6 55 52.6 59 L54.6 59.6 C54.6 55 55.2 50.6 56.8 46.8 Z" fill="#5b5653"/>
<!-- beard -->
<path d="M56.3 79 C60 75 66 73.6 72 74.4 L80.7 73 L90 74.6 C94 75 97 77.6 98.4 82 C100 85 100.8 88 100.5 90.3 C100.6 94 100 98 98.8 101.2 C96.4 105 92.6 107.6 88.4 109 C84.4 110 80.4 110 76.6 109 C71.4 107.6 66.6 105.2 63.3 101.8 C61.6 99 60.2 96.4 59.4 93.4 C57.8 89 56.8 86 56.3 79 Z" fill="url(#g3beard)"/>
<path d="M67 80.6 Q72 74.4 80.7 73.2 Q89 74.4 94 80.6 Q88 78.6 80.7 78.8 Q73 78.6 67 80.6 Z" fill="#35302e"/>
<path d="M77 80.6 Q80.7 82 84.4 80.6" stroke="#9a6a58" stroke-width="1.3" fill="none"/>
<!-- nose -->
<path d="M82.6 60 Q85 68 83 71 Q80 72.4 78 70.6" stroke="#8f6043" stroke-width="1.4" fill="none" opacity=".8"/>
<!-- glasses -->
<circle cx="69" cy="61.8" r="8.4" fill="#a87654" fill-opacity=".45" stroke="#2e1f16" stroke-width="2.3"/><circle cx="90.2" cy="60.1" r="7.5" fill="#a87654" fill-opacity=".45" stroke="#2e1f16" stroke-width="2.3"/>
<path d="M77 59.6 Q79.8 57.4 83 58.6" stroke="#2e1f16" stroke-width="1.9" fill="none"/><path d="M60.6 60.8 L52.9 60.5" stroke="#2e1f16" stroke-width="1.9" fill="none"/>
<ellipse cx="69.4" cy="62.4" rx="2.9" ry="1.5" fill="#2b1d17"/><ellipse cx="89.8" cy="60.6" rx="2.7" ry="1.5" fill="#2b1d17"/>
</g>
</g>
</svg>
<svg class="abs" style="left:115px;top:565px" width="94" height="94" viewBox="115 565 94 94"><circle cx="162.9" cy="612.2" r="44.4" fill="#fff" stroke="#dedede" stroke-width="1"/></svg>
<svg class="abs" style="left:139px;top:588px" width="48" height="48" viewBox="139 588 48 48" fill="none" stroke="#767676" stroke-width="2.9" stroke-linejoin="round">
<rect x="144.35" y="602.45" width="37.2" height="26.1" rx="1.6"/>
<path d="M157.35 602 V596.6 Q157.35 594.95 159 594.95 H167.1 Q168.75 594.95 168.75 596.6 V602"/>
<path d="M144.4 616.6 H159 M167 616.6 H181.6"/>
<rect x="159.25" y="612.5" width="7.4" height="7.8" stroke-linejoin="miter"/>
</svg>

</body>
</html>
